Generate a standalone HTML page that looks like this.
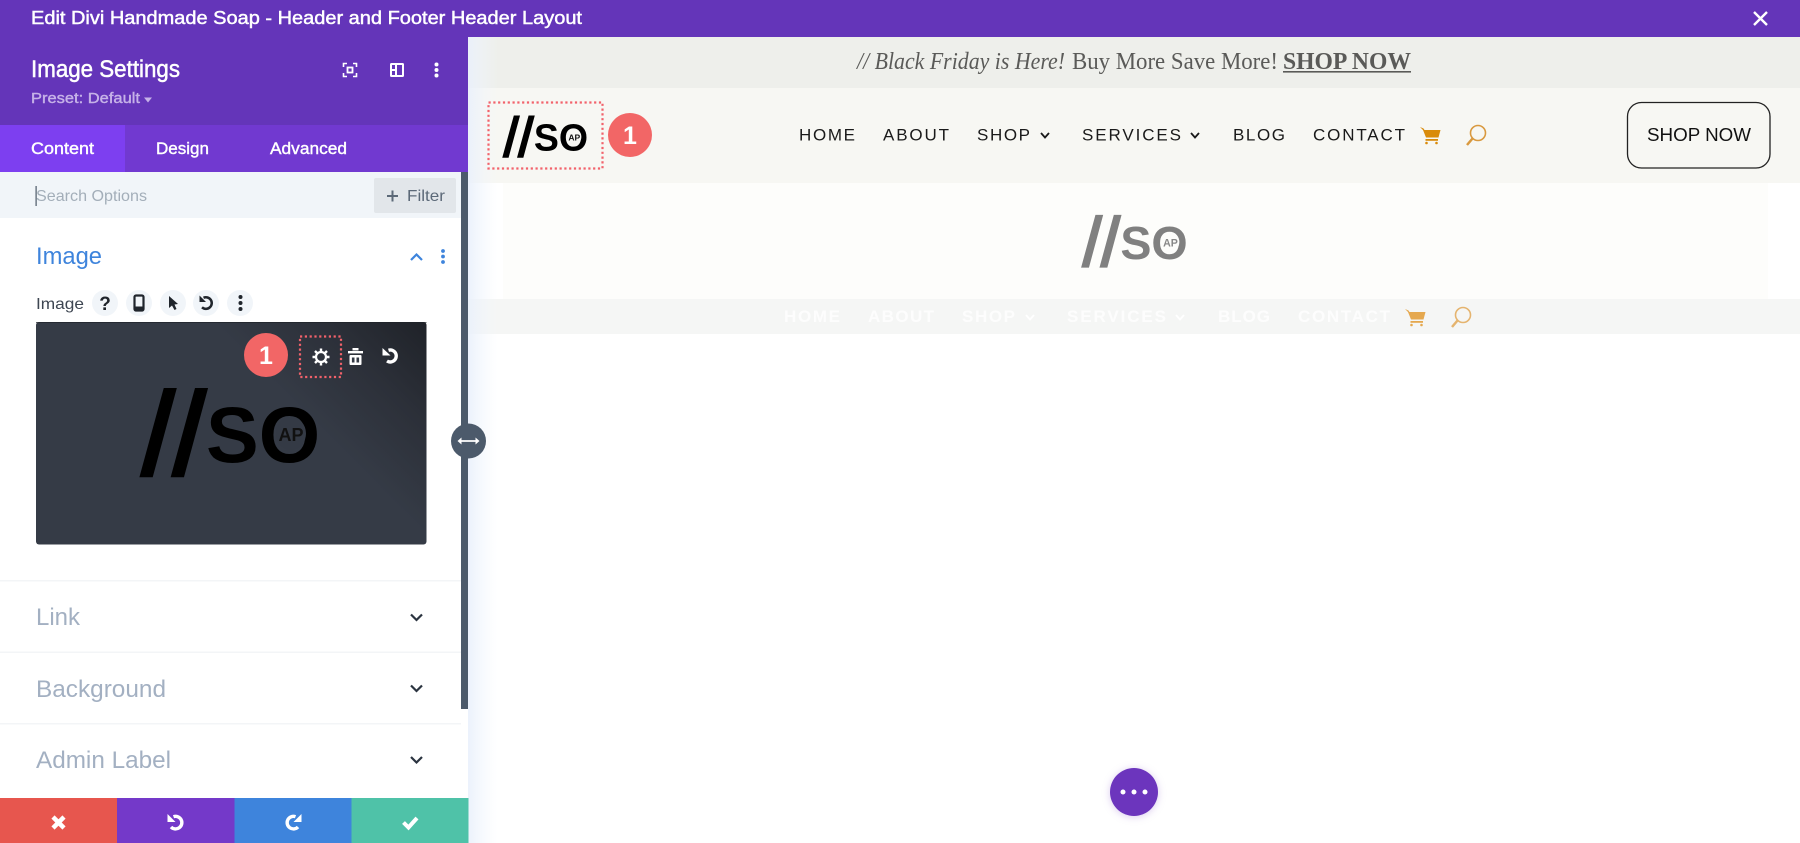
<!DOCTYPE html>
<html lang="en">
<head>
<meta charset="utf-8">
<title>Edit Divi Handmade Soap</title>
<style>
html,body{margin:0;padding:0;background:#fff;width:1800px;height:843px;overflow:hidden}
svg{display:block;position:absolute;left:0;top:0}
text{font-family:"Liberation Sans",sans-serif}
.serif{font-family:"Liberation Serif",serif}
</style>
</head>
<body>
<svg width="1800" height="843" viewBox="0 0 1800 843" xmlns="http://www.w3.org/2000/svg">
<defs>
<linearGradient id="sh" x1="0" x2="1" y1="0" y2="0"><stop offset="0" stop-color="#e9f0fb" stop-opacity=".9"/><stop offset="1" stop-color="#f3f7fd" stop-opacity="0"/></linearGradient>
<linearGradient id="pv" gradientUnits="userSpaceOnUse" x1="428" y1="322" x2="320" y2="430"><stop offset="0" stop-color="#1f2228"/><stop offset=".5" stop-color="#2c3039"/><stop offset="1" stop-color="#353b46"/></linearGradient>
</defs>

<rect width="1800" height="843" fill="#fff"/>

<!-- right side bars -->
<rect x="468" y="36" width="1332" height="52" fill="#eeefeb"/>
<rect x="468" y="88" width="1332" height="95" fill="#f7f7f3"/>
<rect x="503" y="183" width="1265" height="116" fill="#fdfdfb"/>
<rect x="468" y="299" width="1332" height="35" fill="#f5f6f5"/>
<rect x="468" y="36" width="30" height="807" fill="url(#sh)"/>

<!-- top bar -->
<rect width="1800" height="37" fill="#6435b9"/>
<text x="31" y="24" font-size="18" fill="#fff" stroke="#fff" stroke-width=".45" textLength="551" lengthAdjust="spacingAndGlyphs">Edit Divi Handmade Soap - Header and Footer Header Layout</text>
<path d="M1754 12L1767 25M1767 12L1754 25" stroke="#fff" stroke-width="2.400" fill="none"/>

<!-- announcement -->
<g fill="#5a5a58" font-size="24">
<text class="serif" x="857" y="69" font-style="italic" textLength="208" lengthAdjust="spacingAndGlyphs">// Black Friday is Here!</text>
<text class="serif" x="1072" y="69" textLength="206" lengthAdjust="spacingAndGlyphs">Buy More Save More!</text>
<text class="serif" x="1283" y="69" font-weight="700" textLength="128" lengthAdjust="spacingAndGlyphs">SHOP NOW</text>
<rect x="1283" y="71" width="128" height="1.600"/>
</g>

<!-- header logo -->
<rect x="488.500" y="102.500" width="114" height="66" fill="none" stroke="#f2626b" stroke-width="2.200" stroke-dasharray="2.200 2.600"/>
<g transform="translate(503 157) scale(.475)">
<text x="1" y="-2" font-size="116" letter-spacing="-1" fill="#000" stroke="#000" stroke-width="4">//</text>
<text x="65" y="-14" font-size="79" font-weight="700" fill="#000">SO</text>
<ellipse cx="150" cy="-42.500" rx="15" ry="16.500" fill="#f7f7f3"/>
<text x="150" y="-35" font-size="18" font-weight="700" fill="#111" text-anchor="middle">AP</text>
</g>
<circle cx="630" cy="135" r="22" fill="#f26666"/>
<text x="630" y="144" font-size="25" font-weight="700" fill="#fff" text-anchor="middle">1</text>

<!-- nav -->
<g font-size="17" fill="#1a1a1a">
<text x="799" y="140.500" textLength="56">HOME</text>
<text x="883" y="140.500" textLength="66">ABOUT</text>
<text x="977" y="140.500" textLength="53">SHOP</text>
<text x="1082" y="140.500" textLength="99">SERVICES</text>
<text x="1233" y="140.500" textLength="52">BLOG</text>
<text x="1313" y="140.500" textLength="92">CONTACT</text>
</g>
<path d="M1041 133L1045 137.500L1049 133M1191 133L1195 137.500L1199 133" fill="none" stroke="#1a1a1a" stroke-width="1.800"/>
<g fill="#d98b0a" transform="translate(-1 0)">
<path d="M1421 127L1424.500 128.500L1425.500 130L1441.500 130L1439.500 137.500L1427 137.500L1424 130Z"/>
<rect x="1426.500" y="139" width="12.500" height="1.800"/>
<circle cx="1427.500" cy="143" r="1.300"/><circle cx="1437.500" cy="143" r="1.300"/>
</g>
<circle cx="1478" cy="133" r="7.500" fill="none" stroke="#d9993f" stroke-width="1.600"/>
<path d="M1472.500 138.500L1467 145" stroke="#d9993f" stroke-width="2.500" fill="none"/>

<!-- shop button -->
<rect x="1627.500" y="102.500" width="142.500" height="65.500" rx="14" fill="none" stroke="#222" stroke-width="1.300"/>
<text x="1647" y="141" font-size="18.500" fill="#111" textLength="104" lengthAdjust="spacingAndGlyphs">SHOP NOW</text>

<!-- center grey logo -->
<g transform="translate(1082 267) scale(.59)">
<text x="1" y="-2" font-size="116" letter-spacing="-1" fill="#808080" stroke="#808080" stroke-width="4">//</text>
<text x="65" y="-14" font-size="79" font-weight="700" fill="#808080">SO</text>
<ellipse cx="150" cy="-42.500" rx="15" ry="16.500" fill="#fdfdfb"/>
<text x="150" y="-35" font-size="18" font-weight="700" fill="#888" text-anchor="middle">AP</text>
</g>

<!-- ghost menu strip -->
<g font-size="17" font-weight="700" fill="#fff" opacity=".85">
<text x="784" y="322" textLength="56">HOME</text>
<text x="868" y="322" textLength="66">ABOUT</text>
<text x="962" y="322" textLength="53">SHOP</text>
<text x="1067" y="322" textLength="99">SERVICES</text>
<text x="1218" y="322" textLength="52">BLOG</text>
<text x="1298" y="322" textLength="92">CONTACT</text>
</g>
<path d="M1026 315L1030 319.500L1034 315M1176 315L1180 319.500L1184 315" fill="none" stroke="#fff" stroke-width="1.800"/>
<g fill="#e5a84f" transform="translate(-16 182)">
<path d="M1421 127L1424.500 128.500L1425.500 130L1441.500 130L1439.500 137.500L1427 137.500L1424 130Z"/>
<rect x="1426.500" y="139" width="12.500" height="1.800"/>
<circle cx="1427.500" cy="143" r="1.300"/><circle cx="1437.500" cy="143" r="1.300"/>
</g>
<g transform="translate(-15 182)">
<circle cx="1478" cy="133" r="7.500" fill="none" stroke="#e5b46f" stroke-width="1.600"/>
<path d="M1472.500 138.500L1467 145" stroke="#e5b46f" stroke-width="2.500" fill="none"/>
</g>

<!-- FAB -->
<circle cx="1134" cy="792" r="24" fill="#6c35bd" style="filter:drop-shadow(0 1px 4px rgba(108,53,189,.25))"/>
<circle cx="1123" cy="792" r="2.500" fill="#fff"/><circle cx="1134" cy="792" r="2.500" fill="#fff"/><circle cx="1145" cy="792" r="2.500" fill="#fff"/>

<!-- panel -->
<rect x="0" y="37" width="468" height="88" fill="#6435b9"/>
<rect x="0" y="125" width="468" height="47" fill="#7139d0"/>
<rect x="0" y="125" width="125" height="47" fill="#7d3ff0"/>
<rect x="0" y="172" width="468" height="626" fill="#fff"/>
<rect x="0" y="172" width="461" height="46" fill="#f1f5f9"/>

<text x="31" y="77" font-size="24" fill="#fff" stroke="#fff" stroke-width=".5" textLength="149" lengthAdjust="spacingAndGlyphs">Image Settings</text>
<text x="31" y="103" font-size="15" fill="#c6b2e8" stroke="#c6b2e8" stroke-width=".4" textLength="109" lengthAdjust="spacingAndGlyphs">Preset: Default</text>
<path d="M144 97.500L152 97.500L148 102.500Z" fill="#c6b2e8"/>

<!-- header icons -->
<path d="M343.500 67V63.500H347M353 63.500H356.500V67M356.500 73V76.500H353M347 76.500H343.500V73" fill="none" stroke="#fff" stroke-width="1.600"/>
<rect x="347.500" y="67.500" width="5" height="5" fill="none" stroke="#fff" stroke-width="1.800"/>
<rect x="390" y="63" width="14" height="14" rx="1.500" fill="#fff"/>
<rect x="392" y="65" width="3" height="4" fill="#6435b9"/><rect x="392" y="71" width="3" height="4" fill="#6435b9"/><rect x="397" y="65" width="5" height="10" fill="#6435b9"/>
<circle cx="436.500" cy="64.500" r="2" fill="#fff"/><circle cx="436.500" cy="70" r="2" fill="#fff"/><circle cx="436.500" cy="75.500" r="2" fill="#fff"/>

<!-- tabs -->
<g font-size="17" fill="#fff" stroke="#fff" stroke-width=".4">
<text x="31" y="154" textLength="63" lengthAdjust="spacingAndGlyphs">Content</text>
<text x="156" y="154" textLength="53" lengthAdjust="spacingAndGlyphs">Design</text>
<text x="270" y="154" textLength="77" lengthAdjust="spacingAndGlyphs">Advanced</text>
</g>

<!-- search -->
<text x="36" y="201" font-size="16" fill="#a3aeb9" textLength="111" lengthAdjust="spacingAndGlyphs">Search Options</text>
<rect x="35.500" y="186" width="1.200" height="20" fill="#4c5866"/>
<rect x="374" y="178" width="82" height="35" rx="2" fill="#e2e6ea"/>
<path d="M392.500 190.500V201.500M387 196H398" stroke="#5c6978" stroke-width="2" fill="none"/>
<text x="407" y="201" font-size="16" fill="#5c6978" textLength="38" lengthAdjust="spacingAndGlyphs">Filter</text>

<!-- scrollbar -->
<rect x="461" y="172" width="7" height="537" fill="#4c5a6b"/>

<!-- image section -->
<text x="36" y="264" font-size="24" fill="#3e84dc" textLength="66" lengthAdjust="spacingAndGlyphs">Image</text>
<path d="M411 260L416.500 254.500L422 260" fill="none" stroke="#3e84dc" stroke-width="2.200"/>
<circle cx="443" cy="251" r="1.900" fill="#3e84dc"/><circle cx="443" cy="256.500" r="1.900" fill="#3e84dc"/><circle cx="443" cy="262" r="1.900" fill="#3e84dc"/>

<text x="36" y="309" font-size="16" fill="#3e4652" textLength="48" lengthAdjust="spacingAndGlyphs">Image</text>
<g fill="#f1f5f9"><circle cx="105" cy="303" r="13"/><circle cx="139" cy="303" r="13"/><circle cx="173" cy="303" r="13"/><circle cx="206" cy="303" r="13"/><circle cx="240" cy="303" r="13"/></g>
<text x="105" y="310" font-size="19" font-weight="700" fill="#20252c" text-anchor="middle">?</text>
<rect x="134.500" y="295.500" width="9" height="15" rx="1.500" fill="none" stroke="#20252c" stroke-width="2.200"/>
<rect x="134.500" y="306.500" width="9" height="4" fill="#20252c"/>
<path d="M169 296L169 308L172 305.500L174.500 310L176.500 309L174.500 304.500L178 304Z" fill="#20252c"/>
<g transform="translate(206.500 303)"><path d="M-3 -5.200A5.800 5.800 0 1 1 -4.500 4.300" fill="none" stroke="#20252c" stroke-width="2.500"/><path d="M-7 -7.500L-7 -1L-.5 -1Z" fill="#20252c"/></g>
<circle cx="240.500" cy="297" r="2" fill="#20252c"/><circle cx="240.500" cy="303" r="2" fill="#20252c"/><circle cx="240.500" cy="309" r="2" fill="#20252c"/>

<!-- preview -->
<rect x="36" y="322" width="390.500" height="222.500" rx="3" fill="url(#pv)"/>
<rect x="36" y="322" width="390.500" height="1" fill="#1f2329" opacity=".7"/>
<g transform="translate(141 476)">
<text x="1" y="-2" font-size="116" letter-spacing="-1" fill="#000" stroke="#000" stroke-width="4">//</text>
<text x="65" y="-14" font-size="79" font-weight="700" fill="#000">SO</text>
<ellipse cx="150" cy="-42.500" rx="15" ry="16.500" fill="#343a45"/>
<text x="150" y="-35" font-size="18" font-weight="700" fill="#111" text-anchor="middle">AP</text>
</g>
<circle cx="266" cy="355" r="22" fill="#f26666"/>
<text x="266" y="364" font-size="25" font-weight="700" fill="#fff" text-anchor="middle">1</text>
<rect x="300" y="336.500" width="41" height="40.500" fill="none" stroke="#f2626b" stroke-width="2.200" stroke-dasharray="2.200 2.600"/>
<g transform="translate(321 357)" stroke="#fff" fill="none">
<circle r="5" stroke-width="2.200"/>
<path d="M0 -8.500V-5.500M0 5.500V8.500M-8.500 0H-5.500M5.500 0H8.500M-6 -6L-4 -4M4 4L6 6M-6 6L-4 4M4 -4L6 -6" stroke-width="2.400"/>
</g>
<g transform="translate(355.500 357)">
<rect x="-7.500" y="-6" width="15" height="2.400" fill="#fff"/>
<rect x="-3" y="-9" width="6" height="2.400" fill="#fff"/>
<rect x="-6" y="-2" width="12" height="10" rx="1" fill="#fff"/>
<rect x="-3.600" y="0.500" width="2.600" height="5" fill="#343a45"/>
<rect x="1" y="0.500" width="2.600" height="5" fill="#343a45"/>
</g>
<g transform="translate(391 356)"><path d="M-2.500 -5.800A6 6 0 1 1 -4 5" fill="none" stroke="#fff" stroke-width="3.400"/><path d="M-8.500 -8L-8.500 -.5L-.5 -.5Z" fill="#fff"/></g>

<!-- sections -->
<g fill="#f3f5f7">
<rect x="0" y="580" width="461" height="1.500"/>
<rect x="0" y="651.500" width="461" height="1.500"/>
<rect x="0" y="723" width="461" height="1.500"/>
</g>
<g font-size="24" fill="#a3b0c2">
<text x="36" y="625" textLength="44" lengthAdjust="spacingAndGlyphs">Link</text>
<text x="36" y="697" textLength="130" lengthAdjust="spacingAndGlyphs">Background</text>
<text x="36" y="768" textLength="135" lengthAdjust="spacingAndGlyphs">Admin Label</text>
</g>
<path d="M411 614.500L416.500 620L422 614.500M411 685.500L416.500 691L422 685.500M411 757L416.500 762.500L422 757" fill="none" stroke="#2b3440" stroke-width="2.200"/>

<!-- bottom buttons -->
<rect x="0" y="798" width="117" height="45" fill="#e7564e"/>
<rect x="117" y="798" width="117.500" height="45" fill="#7439c9"/>
<rect x="234.500" y="798" width="117" height="45" fill="#3e84dc"/>
<rect x="351.500" y="798" width="117" height="45" fill="#4fc2a8"/>
<path d="M53 817L64 828M64 817L53 828" stroke="#fff" stroke-width="4.500" fill="none"/>
<g transform="translate(176 822.500)"><path d="M-2.500 -5.800A6.300 6.300 0 1 1 -5 4.500" fill="none" stroke="#fff" stroke-width="3.400"/><path d="M-8.500 -8.500L-8.500 -.5L-.5 -.5Z" fill="#fff"/></g>
<g transform="translate(293 822.500) scale(-1 1)"><path d="M-2.500 -5.800A6.300 6.300 0 1 1 -5 4.500" fill="none" stroke="#fff" stroke-width="3.400"/><path d="M-8.500 -8.500L-8.500 -.5L-.5 -.5Z" fill="#fff"/></g>
<path d="M403.500 822.500L408.500 827.500L417 818" stroke="#fff" stroke-width="4" fill="none"/>

<!-- resize handle -->
<circle cx="468.500" cy="441" r="17.500" fill="#4c5a6b"/>
<path d="M460 441H477" stroke="#fff" stroke-width="1.800"/>
<path d="M457.500 441L461.500 437.500V444.500ZM479.500 441L475.500 437.500V444.500Z" fill="#fff"/>
</svg>
</body>
</html>
